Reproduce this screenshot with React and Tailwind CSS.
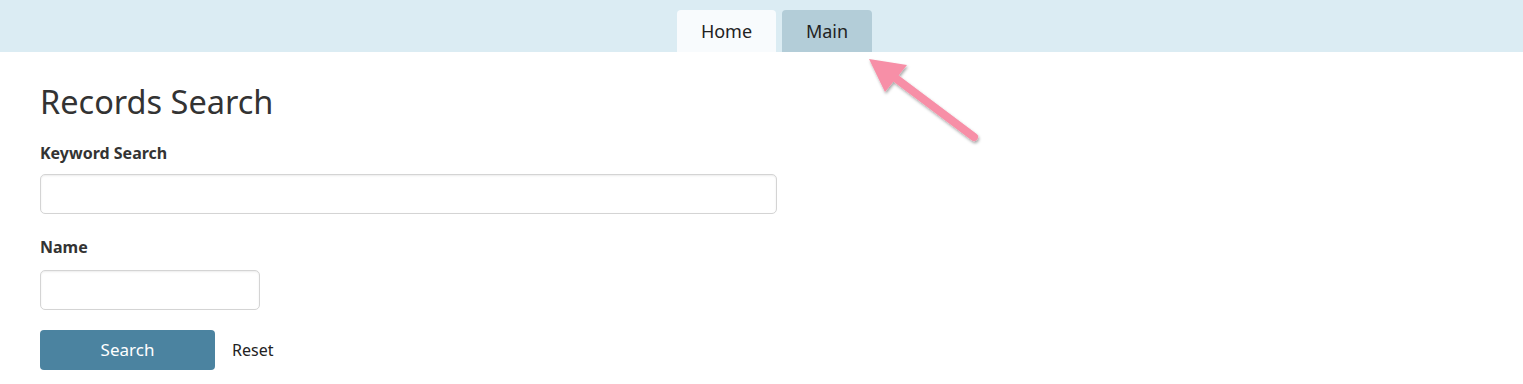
const App = () => {
  return (
    <div className="relative min-h-[384px] bg-white text-[#333] font-['Noto_Sans',sans-serif]">
      {/* Top nav */}
      <div className="h-[52px] bg-[#dbecf3] flex justify-center items-end">
        <div className="flex gap-[6px] ml-[26px]">
          <a className="w-[99px] h-[42px] flex items-center justify-center rounded-t-[4px] bg-[#f8fbfd] text-[18px] text-[#222]">Home</a>
          <a className="w-[90px] h-[42px] flex items-center justify-center rounded-t-[4px] bg-[#b3cdd8] text-[18px] text-[#222]">Main</a>
        </div>
      </div>

      <div className="px-[40px] pt-[28px]">
        <h1 className="text-[32.5px] leading-[44px] font-normal text-[#333]">Records Search</h1>

        <label className="block mt-[18px] text-[16px] font-bold leading-[22px] text-[#333]">Keyword Search</label>
        <input className="block mt-[10px] w-[737px] h-[40px] rounded-[5px] border border-[#d4d4d4] shadow-[inset_0_1px_2px_rgba(0,0,0,0.08)]" />

        <label className="block mt-[22px] text-[16px] font-bold leading-[22px] text-[#333]">Name</label>
        <input className="block mt-[12px] w-[220px] h-[40px] rounded-[5px] border border-[#d4d4d4] shadow-[inset_0_1px_2px_rgba(0,0,0,0.08)]" />

        <div className="flex items-center mt-[20px] gap-[17px]">
          <button className="w-[175px] h-[40px] rounded-[4px] bg-[#4b83a0] text-white text-[17px]">Search</button>
          <a className="text-[16px] text-[#222]">Reset</a>
        </div>
      </div>

      {/* Annotation arrow */}
      <svg className="absolute left-[860px] top-[52px]" width="130" height="100" viewBox="0 0 130 100">
        <defs>
          <filter id="sh" x="-20%" y="-20%" width="140%" height="140%">
            <feDropShadow dx="1" dy="2" stdDeviation="1.5" floodColor="#000" floodOpacity="0.35" />
          </filter>
        </defs>
        <g filter="url(#sh)">
          <line x1="114" y1="85" x2="34" y2="25" stroke="#f78fa7" strokeWidth="8" strokeLinecap="round" />
          <polygon points="9,7 47,13 25,40" fill="#f78fa7" />
        </g>
      </svg>
    </div>
  );
};

export default App;
